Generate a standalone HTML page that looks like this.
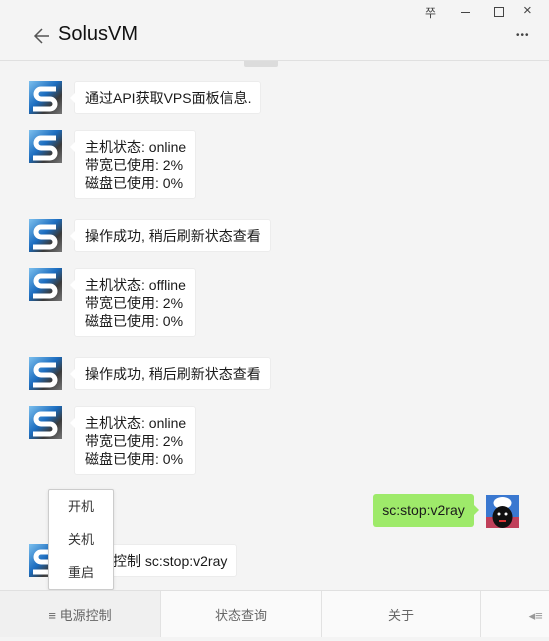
<!DOCTYPE html>
<html><head><meta charset="utf-8"><style>
body{margin:0;width:549px;height:637px;background:#f4f4f4;font-family:"Liberation Sans","Noto Sans CJK SC",sans-serif;position:relative;overflow:hidden;color:#1a1a1a}
.a{position:absolute}
.av{position:absolute;left:29px;width:33px;height:33px}
.bub{position:absolute;left:74px;background:#fff;border:1px solid #ececec;border-radius:3px;padding:7px 9px 6px 10px;font-size:14px;line-height:18px}
.bub:before{content:"";position:absolute;left:-5px;top:11px;border:5px solid transparent;border-left:0;border-right-color:#fff}
.tab{position:absolute;top:591px;height:46px;line-height:50px;text-align:center;font-size:13px;color:#666;border-left:1px solid #e2e2e2}
</style></head><body>
<svg width="0" height="0" style="position:absolute"><defs>
<linearGradient id="g" x1="0" y1="0" x2="1" y2="1"><stop offset="0" stop-color="#7cc0ee"/><stop offset=".45" stop-color="#1b6cbf"/><stop offset=".7" stop-color="#3a3a3a"/><stop offset="1" stop-color="#777"/></linearGradient>
<symbol id="s" viewBox="0 0 33 33"><rect width="33" height="33" fill="url(#g)"/><path d="M27 8H12a5 5 0 0 0 0 10h9a5 5 0 0 1 0 10H4" stroke="#fff" stroke-width="5" fill="none"/></symbol></defs></svg>
<div class="a" style="left:425px;top:4px;font-size:12px;color:#444">쭈</div>
<div class="a" style="left:439px;top:2px;font-size:13px;color:#444;width:100px">
<span class="a" style="left:22px;top:10px;width:9px;height:1px;background:#444"></span>
<span class="a" style="left:55px;top:5px;width:8px;height:8px;border:1px solid #444"></span>
<span class="a" style="left:84px;top:0px;font-size:15px">×</span></div>
<svg class="a" style="left:33px;top:27px" width="18" height="18"><path d="M16 9H2M9 2L2 9l7 7" stroke="#555" stroke-width="1.5" fill="none"/></svg>
<div class="a" style="left:58px;top:23px;font-size:20px;color:#111">SolusVM</div>
<div class="a" style="left:516px;top:30px;font-size:10px;letter-spacing:1px;color:#444">•••</div>
<div class="a" style="left:0;top:60px;width:549px;height:1px;background:#e0e0e0"></div>
<div class="a" style="left:244px;top:61px;width:34px;height:6px;background:#dcdcdc;border-radius:0 0 2px 2px"></div>

<svg class="av" style="top:81px"><use href="#s"/></svg><div class="bub" style="top:81px">通过API获取VPS面板信息.</div>
<svg class="av" style="top:130px"><use href="#s"/></svg><div class="bub" style="top:130px">主机状态: online<br>带宽已使用: 2%<br>磁盘已使用: 0%</div>
<svg class="av" style="top:219px"><use href="#s"/></svg><div class="bub" style="top:219px">操作成功, 稍后刷新状态查看</div>
<svg class="av" style="top:268px"><use href="#s"/></svg><div class="bub" style="top:268px">主机状态: offline<br>带宽已使用: 2%<br>磁盘已使用: 0%</div>
<svg class="av" style="top:357px"><use href="#s"/></svg><div class="bub" style="top:357px">操作成功, 稍后刷新状态查看</div>
<svg class="av" style="top:406px"><use href="#s"/></svg><div class="bub" style="top:406px">主机状态: online<br>带宽已使用: 2%<br>磁盘已使用: 0%</div>

<div class="a" style="left:373px;top:494px;width:101px;height:33px;background:#9eea6a;border-radius:3px;font-size:14px;line-height:33px;text-align:center">sc:stop:v2ray</div>
<div class="a" style="left:474px;top:505px;border:5px solid transparent;border-right:0;border-left-color:#9eea6a"></div>
<svg class="a" style="left:486px;top:495px" width="33" height="33"><rect width="33" height="33" fill="#3a78d0"/><rect y="22" width="33" height="11" fill="#c0405a"/><ellipse cx="16.5" cy="8" rx="9" ry="6" fill="#fff"/><ellipse cx="16.5" cy="22" rx="10" ry="11" fill="#111"/><circle cx="13" cy="19" r="1.5" fill="#fff"/><circle cx="20" cy="19" r="1.5" fill="#fff"/><rect x="13" y="25" width="7" height="2" fill="#d33"/></svg>

<svg class="av" style="top:544px"><use href="#s"/></svg><div class="bub" style="top:544px">电源控制 sc:stop:v2ray</div>

<div class="a" style="left:48px;top:489px;width:64px;height:99px;background:#fff;border:1px solid #ccc;border-radius:2px;font-size:13px;color:#333;text-align:center;line-height:33px;box-shadow:0 1px 3px rgba(0,0,0,.1)">开机<br>关机<br>重启</div>

<div class="a" style="left:0;top:590px;width:549px;height:1px;background:#e0e0e0"></div>
<div class="tab" style="left:0;width:160px;border-left:0;background:#f0f0f0">≡ 电源控制</div>
<div class="tab" style="left:160px;width:160px;background:#fafafa">状态查询</div>
<div class="tab" style="left:321px;width:158px;background:#fafafa">关于</div>
<div class="tab" style="left:480px;width:69px;background:#fafafa;text-align:right;color:#999">◂≡&nbsp;&nbsp;</div>
</body></html>
